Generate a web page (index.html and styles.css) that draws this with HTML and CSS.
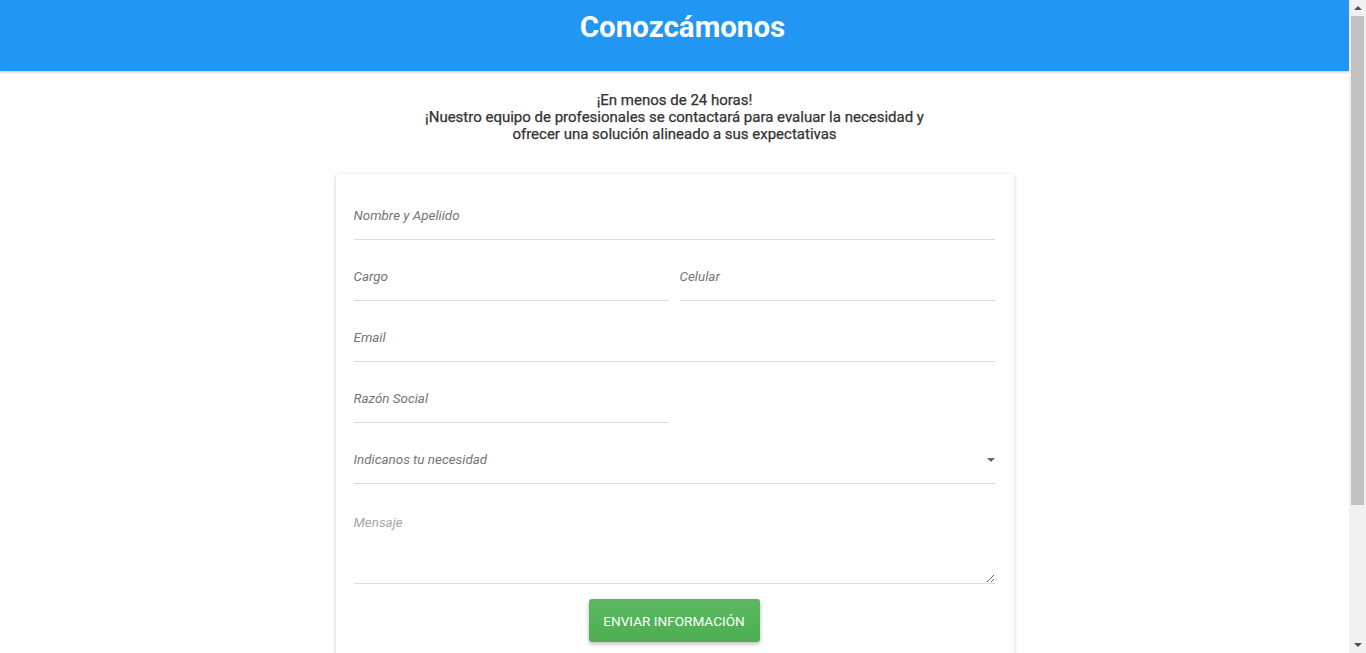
FILE: index.html
```html
<!DOCTYPE html>
<html lang="es">
<head>
<meta charset="utf-8">
<title>Conozcámonos</title>
<link rel="stylesheet" href="styles.css">
</head>
<body>
<div class="page">
  <header class="topbar">
    <h1 class="title">Conozcámonos</h1>
  </header>
  <main class="main">
    <p class="intro">¡En menos de 24 horas!<br>¡Nuestro equipo de profesionales se contactará para evaluar la necesidad y<br>ofrecer una solución alineado a sus expectativas</p>
    <form class="card">
      <div class="field"><input class="input" type="text" placeholder="Nombre y Apeliido"></div>
      <div class="row">
        <div class="field"><input class="input" type="text" placeholder="Cargo"></div>
        <div class="field"><input class="input" type="text" placeholder="Celular"></div>
      </div>
      <div class="field"><input class="input" type="email" placeholder="Email"></div>
      <div class="row">
        <div class="field"><input class="input" type="text" placeholder="Razón Social"></div>
        <div class="field"></div>
      </div>
      <div class="field select-wrap">
        <select class="input select">
          <option>Indicanos tu necesidad</option>
        </select>
        <span class="caret"></span>
      </div>
      <div class="field"><textarea class="textarea" placeholder="Mensaje"></textarea></div>
      <div class="actions"><button class="btn" type="button">Enviar información</button></div>
    </form>
  </main>
</div>
<div class="scrollbar" aria-hidden="true">
  <span class="sb-arrow sb-up"></span>
  <span class="sb-thumb"></span>
  <span class="sb-arrow sb-down"></span>
</div>
</body>
</html>
```
FILE: styles.css
```css
html, body {
  margin: 0;
  padding: 0;
  background: #fff;
  font-family: Roboto, "Liberation Sans", Arial, sans-serif;
}
.page {
  width: calc(100% - 17px);
}
.topbar {
  height: 71px;
  background: #2196f3;
  box-shadow: 0 1px 3px rgba(0,0,0,0.25);
  display: flex;
  align-items: flex-start;
  justify-content: center;
}
.title {
  margin: 9px 0 0;
  padding-left: 16px;
  color: #fff;
  font-size: 29.5px;
  font-weight: 700;
  line-height: 36px;
}
.main {
  display: flex;
  flex-direction: column;
  align-items: center;
  padding-bottom: 30px;
}
.intro {
  margin: 21px 0 0;
  text-align: center;
  color: #333;
  font-size: 15px;
  font-weight: 400;
  line-height: 17px;
  -webkit-text-stroke: 0.25px #333;
}
.card {
  margin-top: 31px;
  width: 678px;
  box-sizing: border-box;
  padding: 5px 19px 130px 18px;
  background: #fff;
  border-radius: 3px;
  box-shadow: 0 1px 4px rgba(0,0,0,0.2);
}
.row {
  display: grid;
  grid-template-columns: 1fr 1fr;
  column-gap: 11px;
}
.field {
  margin-top: 16px;
  position: relative;
}
.input {
  display: block;
  width: 100%;
  height: 45px;
  box-sizing: border-box;
  margin: 0;
  padding: 0 0 4px;
  border: 0;
  border-bottom: 1px solid #dcdcdc;
  outline: none;
  background: transparent;
  font-family: Roboto, "Liberation Sans", Arial, sans-serif;
  font-size: 13.4px;
  font-style: italic;
  color: #757575;
}
.input::placeholder {
  color: #757575;
  opacity: 1;
}
.select {
  appearance: none;
  -webkit-appearance: none;
  border-radius: 0;
  padding-right: 20px;
  cursor: pointer;
}
.caret {
  position: absolute;
  right: 0;
  top: 19px;
  width: 0;
  height: 0;
  border-left: 4px solid transparent;
  border-right: 4px solid transparent;
  border-top: 4px solid #666;
}
.textarea {
  display: block;
  width: 100%;
  height: 84px;
  box-sizing: border-box;
  margin: 0;
  padding: 15px 0 0;
  border: 0;
  border-bottom: 1px solid #dcdcdc;
  outline: none;
  background: transparent;
  font-family: Roboto, "Liberation Sans", Arial, sans-serif;
  font-size: 13.4px;
  font-style: italic;
  line-height: 16px;
  color: #757575;
  resize: vertical;
}
.textarea::placeholder {
  color: #a5a5a5;
  opacity: 1;
}
.actions {
  display: flex;
  justify-content: center;
  margin-top: 15px;
}
.btn {
  height: 43px;
  width: 171px;
  padding: 0;
  border: 0;
  border-radius: 3px;
  background: linear-gradient(#5cb860, #4caf50);
  color: #fff;
  font-family: Roboto, "Liberation Sans", Arial, sans-serif;
  font-size: 13.6px;
  font-weight: 400;
  text-transform: uppercase;
  box-shadow: 0 2px 4px rgba(0,0,0,0.28);
  cursor: pointer;
}
.scrollbar {
  position: fixed;
  top: 0;
  right: 0;
  width: 17px;
  height: 100vh;
  background: #f1f1f1;
  display: flex;
  flex-direction: column;
  align-items: center;
}
.sb-arrow {
  flex: none;
  width: 0;
  height: 0;
  border-left: 4px solid transparent;
  border-right: 4px solid transparent;
}
.sb-up {
  margin-top: 6px;
  border-bottom: 4px solid #505050;
}
.sb-down {
  margin-top: auto;
  margin-bottom: 6px;
  border-top: 4px solid #505050;
}
.sb-thumb {
  flex: none;
  margin-top: 6px;
  width: 13px;
  height: 489px;
  background: #c1c1c1;
}
```
